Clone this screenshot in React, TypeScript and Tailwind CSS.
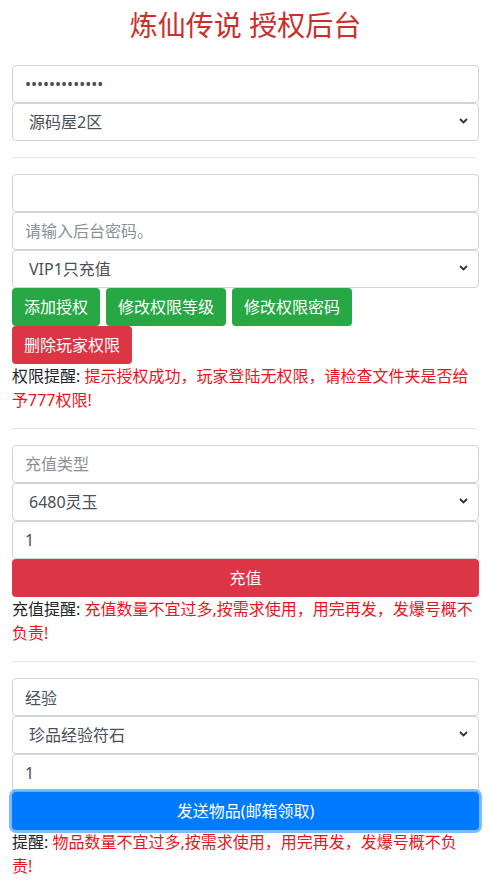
import React from 'react';

const font = { fontFamily: '"Noto Sans", "Noto Sans CJK SC", sans-serif' };

const inputCls =
    'block w-full h-[38px] px-3 text-base leading-6 text-[#495057] bg-white border border-[#ced4da] rounded-[4px] outline-none placeholder:text-[#8a9096]';

const Input = ({ value, placeholder, type = 'text' }: { value?: string; placeholder?: string; type?: string }) => (
    <input type={type} defaultValue={value} placeholder={placeholder} className={inputCls} />
);

const Select = ({ value }: { value: string }) => (
    <div className="relative">
        <select className={inputCls + ' appearance-none pl-4'} defaultValue={value}>
            <option>{value}</option>
        </select>
        <svg
            className="absolute right-[11px] top-[15px] pointer-events-none"
            width="9"
            height="6"
            viewBox="0 0 9 6"
        >
            <path d="M1 1l3.5 3.5L8 1" stroke="#333" strokeWidth="1.8" fill="none" />
        </svg>
    </div>
);

const Hr = () => <div className="my-4 border-t border-black/10 mr-[3px]" />;

const App = () => {
    return (
        <div className="w-[491px] min-h-[882px] bg-white px-3 text-[#212529] text-base leading-6" style={font}>
            <h2 className="pt-2 mb-[23px] text-center text-[28px] leading-[34px] text-[#c9302c]">炼仙传说 授权后台</h2>

            <Input type="password" value="1234567890123" />
            <Select value="源码屋2区" />

            <Hr />

            <Input value="" />
            <Input placeholder="请输入后台密码。" />
            <Select value="VIP1只充值" />
            <div className="flex flex-wrap gap-x-[6px]">
                <button className="h-[38px] px-3 rounded-[4px] bg-[#28a745] text-white">添加授权</button>
                <button className="h-[38px] px-3 rounded-[4px] bg-[#28a745] text-white">修改权限等级</button>
                <button className="h-[38px] px-3 rounded-[4px] bg-[#28a745] text-white">修改权限密码</button>
            </div>
            <button className="h-[38px] px-3 rounded-[4px] bg-[#dc3545] text-white">删除玩家权限</button>
            <p>
                权限提醒: <span className="text-[#e8141e]">提示授权成功，玩家登陆无权限，请检查文件夹是否给<br />予777权限!</span>
            </p>

            <Hr />

            <Input placeholder="充值类型" />
            <Select value="6480灵玉" />
            <Input value="1" />
            <button className="block w-full h-[38px] rounded-[4px] bg-[#dc3545] text-white">充值</button>
            <p>
                充值提醒: <span className="text-[#e8141e]">充值数量不宜过多,按需求使用，用完再发，发爆号概不<br />负责!</span>
            </p>

            <Hr />

            <Input value="经验" />
            <Select value="珍品经验符石" />
            <Input value="1" />
            <button className="block w-full h-[38px] rounded-[4px] bg-[#007bff] text-white ring-[3px] ring-[#007bff]/50">
                发送物品(邮箱领取)
            </button>
            <p>
                提醒: <span className="text-[#e8141e]">物品数量不宜过多,按需求使用，用完再发，发爆号概不负<br />责!</span>
            </p>
        </div>
    );
};

export default App;
